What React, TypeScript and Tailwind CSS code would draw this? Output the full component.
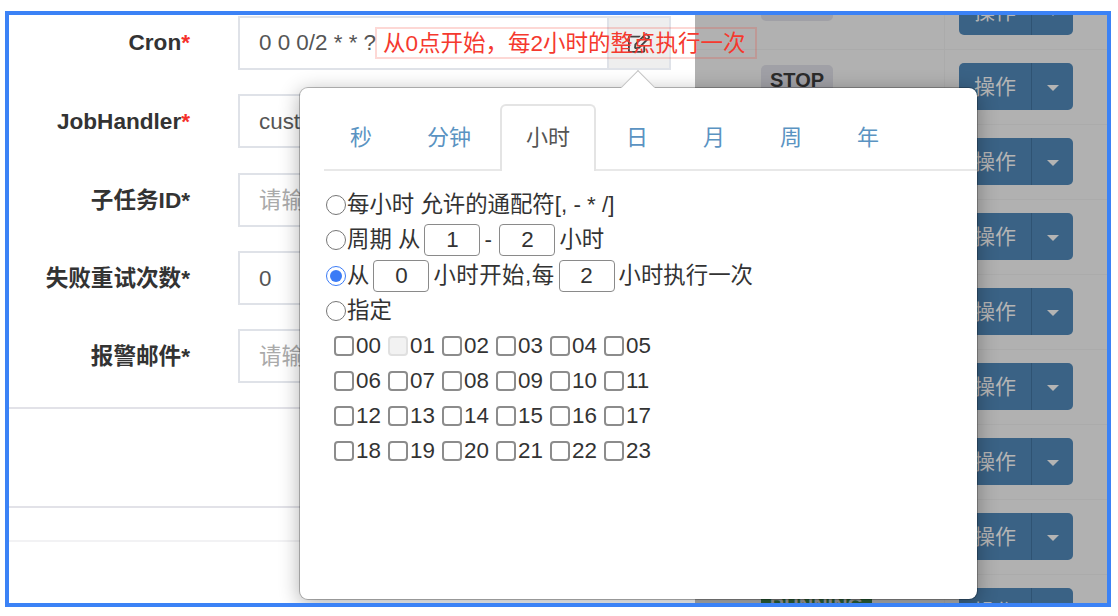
import { FaRegEdit } from "react-icons/fa";

const tabs = ["秒", "分钟", "小时", "日", "月", "周", "年"];
const hours = Array.from({ length: 24 }, (_, i) => String(i).padStart(2, "0"));

const Label = ({ text, red, low }: { text: string; red?: boolean; low?: boolean }) => (
  <label className={`w-[181px] shrink-0 text-right font-bold text-[22.6px] text-[#333] ${low ? "pt-[2px]" : ""}`}>
    {text}
    <span className={red ? "text-[#f5302a]" : "text-[#333]"}>*</span>
  </label>
);

const Field = ({ text, value, placeholder, red }: { text: string; value?: string; placeholder?: string; red?: boolean }) => (
  <div className="flex items-center h-[54px] mb-[24.3px]">
    <Label text={text} red={red} low />
    <input
      readOnly
      value={value}
      placeholder={placeholder}
      className="ml-[48px] w-[433px] h-full px-[19px] pt-[2px] border-2 border-[#dfe2e8] text-[#555] placeholder:text-[#aaa] outline-none"
    />
  </div>
);

const NumBox = ({ value }: { value: string }) => (
  <input
    readOnly
    value={value}
    className="w-[56px] h-[32px] mx-[4px] border border-[#8a8a8a] rounded-[4px] text-center text-[#333] outline-none"
  />
);

const Row = ({ status, first }: { status?: "stop" | "run" | "blank"; first?: boolean }) => (
  <div className={`flex h-[75px] shrink-0 border-b border-[#ababab] ${first ? "-mt-[40px]" : ""}`}>
    <div className="w-[250px] shrink-0 border-r border-[#ababab] pl-[66px] pt-[15px]">
      {status === "stop" && (
        <span className="block w-[72px] h-[31px] rounded-[5px] bg-[#a0a0a6] text-center text-[20px] leading-[31px] font-bold text-[#2b2b2b]">STOP</span>
      )}
      {status === "blank" && <span className="block w-[72px] h-[31px] rounded-[5px] bg-[#a0a0a6]" />}
      {status === "run" && (
        <span className="block w-[111px] h-[31px] rounded-[5px] bg-[#2b5f36] text-center text-[20px] leading-[31px] font-bold text-[#9a9a9a]">RUNNING</span>
      )}
    </div>
    <div className="pl-[14px] pt-[13px]">
      <div className="flex w-[114px] h-[47px] rounded-[5px] bg-[#3a6285] text-[#b4b4b4] text-[21px]">
        <span className="w-[73px] border-r border-[#2f5373] text-center leading-[47px]">操作</span>
        <span className="flex-1 flex items-center justify-center pt-[3px]">
          <span className="border-x-[6px] border-x-transparent border-t-[6px] border-t-[#b4b4b4]" />
        </span>
      </div>
    </div>
  </div>
);

export default function App() {
  return (
    <div className="w-[1118px] h-[616px] bg-white pt-[11px] pl-[5px] text-[22.4px] font-['Liberation_Sans','Noto_Sans_CJK_SC',sans-serif]">
      <div className="relative flex w-[1106px] h-[596px] border-4 border-[#3b82f6] overflow-hidden">
        {/* Modal form */}
        <div className="w-[686px] shrink-0 bg-white pt-[1px]">
          <div className="flex items-center h-[54px] mb-[24.3px]">
            <Label text="Cron" red />
            <input
              readOnly
              value="0 0 0/2 * * ?"
              className="ml-[48px] w-[369px] h-full px-[19px] border-2 border-r-0 border-[#dfe2e8] text-[#555] outline-none"
            />
            <div className="w-[64px] h-full flex items-center justify-center bg-[#eee] border-2 border-[#dfe2e8]">
              <FaRegEdit className="w-[22px] h-[22px] text-[#444]" />
            </div>
          </div>
          <Field text="JobHandler" value="customJobHandler" red />
          <Field text="子任务ID" placeholder="请输入子任务ID" />
          <Field text="失败重试次数" value="0" />
          <Field text="报警邮件" placeholder="请输入报警邮件" />
          <div className="border-t-2 border-[#e2e2e8] h-[99px]" />
          <div className="border-t-2 border-[#e2e2e8] h-[34px]" />
          <div className="border-t-2 border-[#f2f2f4]" />
        </div>

        {/* Job table behind the backdrop */}
        <div className="flex-1 flex flex-col bg-[#b1b1b1]">
          <Row status="blank" first />
          <Row status="stop" />
          <Row />
          <Row />
          <Row />
          <Row />
          <Row />
          <Row />
          <Row status="run" />
        </div>

        {/* Cron popover */}
        <div className="absolute left-[290px] top-[72px] w-[679px] h-[513px] bg-white bg-clip-padding border border-[rgba(0,0,0,0.25)] rounded-[9px] shadow-[0_4px_20px_rgba(0,0,0,0.3)] text-[#333]">
          <div className="absolute -top-[13px] left-[326px] w-[24px] h-[24px] rotate-45 bg-white border-l border-t border-[#c4c4c4]" />
          <div className="relative flex ml-[24px] mt-[16px] h-[67px] border-b-2 border-[#e8e8e8] text-[22px]">
            {tabs.map((t) =>
              t === "小时" ? (
                <div key={t} className="h-[67px] px-[24px] mr-[4px] border-2 border-b-0 border-[#e4e4e4] rounded-t-[6px] bg-white text-[#555] leading-[64px]">
                  {t}
                </div>
              ) : (
                <div key={t} className="h-[65px] px-[26px] mr-[3px] text-[#5a93c2] leading-[67px]">
                  {t}
                </div>
              )
            )}
          </div>

          <div className="pl-[26px] pt-[16px]">
            <div className="flex items-center h-[35.5px]">
              <input type="radio" name="hour" readOnly className="w-[20px] h-[20px] m-0 mr-[1px]" />
              每小时 允许的通配符[, - * /]
            </div>
            <div className="flex items-center h-[35.5px]">
              <input type="radio" name="hour" readOnly className="w-[20px] h-[20px] m-0 mr-[1px]" />
              <span className="whitespace-pre">周期 从</span>
              <NumBox value="1" />
              <span className="w-[11px]">-</span>
              <NumBox value="2" />
              小时
            </div>
            <div className="flex items-center h-[35.5px]">
              <input type="radio" name="hour" readOnly checked className="w-[20px] h-[20px] m-0 mr-[1px] accent-[#3b7bf6]" />
              从
              <NumBox value="0" />
              <span className="tracking-[0.5px]">小时开始,每</span>
              <NumBox value="2" />
              小时执行一次
            </div>
            <div className="flex items-center h-[35.5px]">
              <input type="radio" name="hour" readOnly className="w-[20px] h-[20px] m-0 mr-[1px]" />
              指定
            </div>
            <div className="grid grid-cols-[repeat(6,54px)] ml-[8px] -mt-[1px] auto-rows-[35px]">
              {hours.map((h) => (
                <label key={h} className="flex items-center">
                  <input
                    type="checkbox"
                    readOnly
                    disabled={h === "01"}
                    className={`appearance-none w-[20px] h-[20px] mr-[2px] rounded-[4px] border-2 ${h === "01" ? "bg-[#f2f2f2] border-[#e0e0e0]" : "bg-white border-[#8c8c8c]"}`}
                  />
                  {h}
                </label>
              ))}
            </div>
          </div>
        </div>

        {/* Red annotation on top of the cron field */}
        <div className="absolute left-[366px] top-[12px] h-[32px] w-[382px] border-2 border-[rgba(245,60,45,0.2)] pl-[6px] text-[22.5px] leading-[29px] whitespace-nowrap text-[#f5392e]">
          从0点开始，每2小时的整点执行一次
        </div>
      </div>
    </div>
  );
}
